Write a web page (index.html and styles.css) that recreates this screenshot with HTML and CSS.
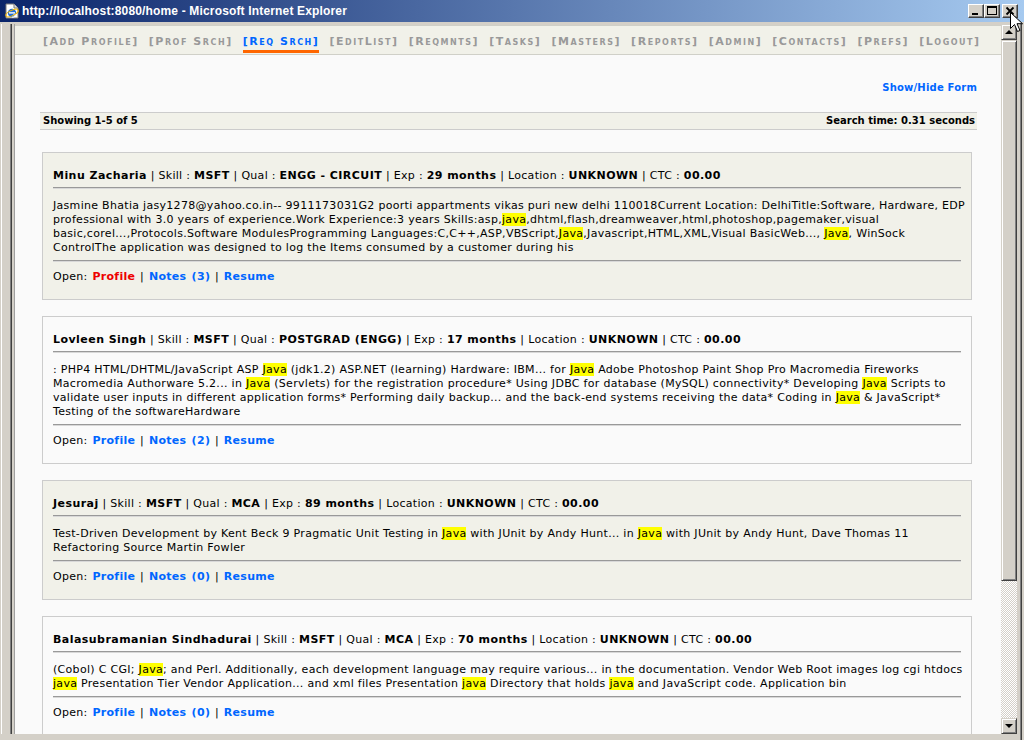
FILE: index.html
```html
<!DOCTYPE html>
<html>
<head>
<meta charset="utf-8">
<title>Search</title>
<link rel="stylesheet" href="styles.css">
</head>
<body>
<div class="window">
  <div class="titlebar">
    <svg class="app-icon" width="16" height="16" viewBox="0 0 16 16">
      <path d="M2 1h8l4 4v10H2z" fill="#fff" stroke="#7a7a7a" stroke-width="1"/>
      <path d="M10 1v4h4" fill="#ddd" stroke="#7a7a7a" stroke-width="1"/>
      <circle cx="8" cy="10" r="4.2" fill="#1f6fd8"/>
      <rect x="5" y="9.2" width="6" height="1.4" fill="#fff"/>
      <path d="M9.5 11.6h2.2a4 4 0 0 1-4 2.6" fill="none" stroke="#fff" stroke-width="1.2"/>
      <ellipse cx="8" cy="10" rx="6.8" ry="2.6" fill="none" stroke="#f0b400" stroke-width="1" transform="rotate(-25 8 10)"/>
    </svg>
    <span class="title">http://localhost:8080/home - Microsoft Internet Explorer</span>
    <div class="caption-buttons">
      <span class="cbtn"><svg width="14" height="12" viewBox="0 0 14 12"><rect x="3" y="8" width="6" height="2" fill="#000"/></svg></span>
      <span class="cbtn"><svg width="14" height="12" viewBox="0 0 14 12"><rect x="2.5" y="1.5" width="9" height="8" fill="none" stroke="#000"/><rect x="2" y="1" width="10" height="2" fill="#000"/></svg></span>
      <span class="cbtn close"><svg width="14" height="12" viewBox="0 0 14 12"><path d="M3.5 2.5l7 7M10.5 2.5l-7 7" stroke="#000" stroke-width="1.8"/></svg></span>
    </div>
  </div>
  <div class="client">
    <div class="frame-left"></div>
    <div class="viewport">
      <nav class="menu">
        <a class="item">[Add Profile]</a>
        <a class="item">[Prof Srch]</a>
        <a class="item active">[Req Srch]</a>
        <a class="item">[EditList]</a>
        <a class="item">[Reqmnts]</a>
        <a class="item">[Tasks]</a>
        <a class="item">[Masters]</a>
        <a class="item">[Reports]</a>
        <a class="item">[Admin]</a>
        <a class="item">[Contacts]</a>
        <a class="item">[Prefs]</a>
        <a class="item">[Logout]</a>
      </nav>
      <main class="main">
        <div class="toggle"><a class="link">Show/Hide Form</a></div>
        <div class="summary"><span>Showing 1-5 of 5</span><span>Search time: 0.31 seconds</span></div>
        <div class="results">
          <div class="card alt">
            <div class="head"><b>Minu Zacharia</b> | Skill : <b>MSFT</b> | Qual : <b>ENGG - CIRCUIT</b> | Exp : <b>29 months</b> | Location : <b>UNKNOWN</b> | CTC : <b>00.00</b></div>
            <div class="body">Jasmine Bhatia jasy1278@yahoo.co.in-- 9911173031G2 poorti appartments vikas puri new delhi 110018Current Location: DelhiTitle:Software, Hardware, EDP<br>professional with 3.0 years of experience.Work Experience:3 years Skills:asp,<mark>java</mark>,dhtml,flash,dreamweaver,html,photoshop,pagemaker,visual<br>basic,corel...,Protocols.Software ModulesProgramming Languages:C,C++,ASP,VBScript,<mark>Java</mark>,Javascript,HTML,XML,Visual BasicWeb..., <mark>Java</mark>, WinSock<br>ControlThe application was designed to log the Items consumed by a customer during his</div>
            <div class="links">Open: <a class="link visited">Profile</a> | <a class="link">Notes (3)</a> | <a class="link">Resume</a></div>
          </div>
          <div class="card">
            <div class="head"><b>Lovleen Singh</b> | Skill : <b>MSFT</b> | Qual : <b>POSTGRAD (ENGG)</b> | Exp : <b>17 months</b> | Location : <b>UNKNOWN</b> | CTC : <b>00.00</b></div>
            <div class="body">: PHP4 HTML/DHTML/JavaScript ASP <mark>Java</mark> (jdk1.2) ASP.NET (learning) Hardware: IBM... for <mark>Java</mark> Adobe Photoshop Paint Shop Pro Macromedia Fireworks<br>Macromedia Authorware 5.2... in <mark>Java</mark> (Servlets) for the registration procedure* Using JDBC for database (MySQL) connectivity* Developing <mark>Java</mark> Scripts to<br>validate user inputs in different application forms* Performing daily backup... and the back-end systems receiving the data* Coding in <mark>Java</mark> &amp; JavaScript*<br>Testing of the softwareHardware</div>
            <div class="links">Open: <a class="link">Profile</a> | <a class="link">Notes (2)</a> | <a class="link">Resume</a></div>
          </div>
          <div class="card alt">
            <div class="head"><b>Jesuraj</b> | Skill : <b>MSFT</b> | Qual : <b>MCA</b> | Exp : <b>89 months</b> | Location : <b>UNKNOWN</b> | CTC : <b>00.00</b></div>
            <div class="body">Test-Driven Development by Kent Beck 9 Pragmatic Unit Testing in <mark>Java</mark> with JUnit by Andy Hunt... in <mark>Java</mark> with JUnit by Andy Hunt, Dave Thomas 11<br>Refactoring Source Martin Fowler</div>
            <div class="links">Open: <a class="link">Profile</a> | <a class="link">Notes (0)</a> | <a class="link">Resume</a></div>
          </div>
          <div class="card">
            <div class="head"><b>Balasubramanian Sindhadurai</b> | Skill : <b>MSFT</b> | Qual : <b>MCA</b> | Exp : <b>70 months</b> | Location : <b>UNKNOWN</b> | CTC : <b>00.00</b></div>
            <div class="body">(Cobol) C CGI; <mark>Java</mark>; and Perl. Additionally, each development language may require various... in the documentation. Vendor Web Root images log cgi htdocs<br><mark>java</mark> Presentation Tier Vendor Application... and xml files Presentation <mark>java</mark> Directory that holds <mark>java</mark> and JavaScript code. Application bin</div>
            <div class="links">Open: <a class="link">Profile</a> | <a class="link">Notes (0)</a> | <a class="link">Resume</a></div>
          </div>
        </div>
      </main>
    </div>
    <div class="scrollbar">
      <span class="sb-btn"><svg width="14" height="14" viewBox="0 0 14 14"><path d="M3 9h8L7 5z" fill="#000"/></svg></span>
      <span class="sb-thumb"></span>
      <span class="sb-track"></span>
      <span class="sb-btn"><svg width="14" height="14" viewBox="0 0 14 14"><path d="M3 5h8L7 9z" fill="#000"/></svg></span>
    </div>
    <div class="frame-right"></div>
  </div>
  <svg class="cursor" width="13" height="21" viewBox="0 0 13 21"><path d="M0.5 0.5v16l4-4 3 7 2.5-1-3-6.8h5.5z" fill="#fff" stroke="#000" stroke-width="1"/></svg>
</div>
</body>
</html>
```

FILE: styles.css
```css
* { box-sizing: border-box; }
html, body { margin: 0; padding: 0; }
body {
  background: #d4d0c8;
  font-family: "DejaVu Sans", Verdana, sans-serif;
  font-size: 11px;
  color: #000;
}
.window {
  position: relative;
  width: 1024px;
  height: 740px;
  overflow: hidden;
  background: #d4d0c8;
  display: flex;
  flex-direction: column;
}
.titlebar {
  height: 22px;
  flex: none;
  background: linear-gradient(to right, #0a246a, #a6caf0);
  display: flex;
  align-items: center;
  padding-left: 4px;
}
.app-icon { flex: none; margin-right: 2px; }
.title {
  color: #fff;
  font-family: "Liberation Sans", Arial, sans-serif;
  font-weight: bold;
  font-size: 12px;
  letter-spacing: 0.16px;
  white-space: nowrap;
}
.caption-buttons {
  margin-left: auto;
  display: flex;
  padding-right: 6px;
}
.cbtn {
  width: 16px;
  height: 14px;
  background: #d4d0c8;
  border: 1px solid;
  border-color: #fff #404040 #404040 #fff;
  box-shadow: inset -1px -1px #808080;
  display: flex;
  align-items: center;
  justify-content: center;
}
.cbtn svg { display: block; }
.cbtn.close { margin-left: 2px; }

.client {
  flex: 1;
  display: flex;
  padding-top: 2px;
  min-height: 0;
}
.frame-left {
  width: 15px;
  flex: none;
  background:
    linear-gradient(to right, #d4d0c8 0 1px, #fff 1px 2px, #d4d0c8 2px 10px, #808080 10px 11px, #404040 11px 12px, #d4d0c8 12px 14px, #a0a0a0 14px 15px);
  margin-bottom: 6px;
}
.viewport {
  flex: 1;
  background: #fafafa;
  overflow: hidden;
  margin-bottom: 6px;
  border-top: 1px solid #d4d0c8;
}
.frame-right {
  width: 7px;
  flex: none;
  background: linear-gradient(to right, #d4d0c8 0 3px, #808080 3px 4px, #404040 4px 5px, #d4d0c8 5px);
}
.scrollbar {
  width: 16px;
  flex: none;
  display: flex;
  flex-direction: column;
  margin-bottom: 6px;
}
.sb-btn {
  height: 16px;
  flex: none;
  background: #d4d0c8;
  border: 1px solid;
  border-color: #d4d0c8 #404040 #404040 #d4d0c8;
  box-shadow: inset 1px 1px #fff, inset -1px -1px #808080;
  display: flex;
  align-items: center;
  justify-content: center;
}
.sb-thumb {
  height: 541px;
  flex: none;
  background: #d4d0c8;
  border: 1px solid;
  border-color: #d4d0c8 #404040 #404040 #d4d0c8;
  box-shadow: inset 1px 1px #fff, inset -1px -1px #808080;
}
.sb-track {
  flex: 1;
  background: conic-gradient(#d4d0c8 25%, #fff 0 50%, #d4d0c8 0 75%, #fff 0) 0 0 / 2px 2px;
}

.menu {
  height: 30px;
  background: #f1f1e9;
  border-top: 1px solid #d0d0c8;
  border-bottom: 1px solid #d0d0c8;
  display: flex;
  align-items: center;
  gap: 10px;
  padding-left: 28px;
  padding-top: 3px;
}
.item {
  position: relative;
  color: #999;
  font-weight: bold;
  font-variant: small-caps;
  font-size: 11px;
  letter-spacing: 1.54px;
  line-height: 13px;
  white-space: nowrap;
}
.item.active { color: #0066ff; }
.item.active::after {
  content: "";
  position: absolute;
  left: 0;
  right: 0;
  bottom: -5px;
  height: 3px;
  background: #ff6600;
}

.main { padding: 0 24px 0 25px; }
.link { color: #0066ff; font-weight: bold; letter-spacing: 0.3px; }
.link.visited { color: #ee0000; }
.toggle {
  text-align: right;
  margin-top: 26px;
  line-height: 14px;
}
.toggle .link { font-size: 10px; letter-spacing: 0.2px; }
.summary {
  margin-top: 17px;
  background: #f1f1e9;
  border-top: 1px solid #ccc;
  border-bottom: 1px solid #ccc;
  display: flex;
  justify-content: space-between;
  font-weight: bold;
  font-size: 10px;
  line-height: 14px;
  padding: 1px 2px 1px 3px;
}
.results { margin-top: 22px; }
.card {
  margin: 0 5px 16px 2px;
  border: 1px solid #ccc;
  background: #fafafa;
  padding: 15px 10px;
  line-height: 14px;
  letter-spacing: 0.3px;
}
.card.alt { background: #f1f1e9; }
.head {
  padding-top: 1px;
  padding-bottom: 4px;
  border-bottom: 1px solid #999;
  box-shadow: 0 1px 0 #d8d8d8;
  white-space: nowrap;
}
.head b { letter-spacing: 0.45px; }
.body {
  margin: 11px 0 5px;
  white-space: nowrap;
}
.links {
  padding-top: 9px;
  border-top: 1px solid #999;
  box-shadow: inset 0 1px 0 #d8d8d8;
  word-spacing: 1px;
}
mark { background: #ffff00; color: #000; }
.cursor {
  position: absolute;
  left: 1010px;
  top: 12px;
}
```
